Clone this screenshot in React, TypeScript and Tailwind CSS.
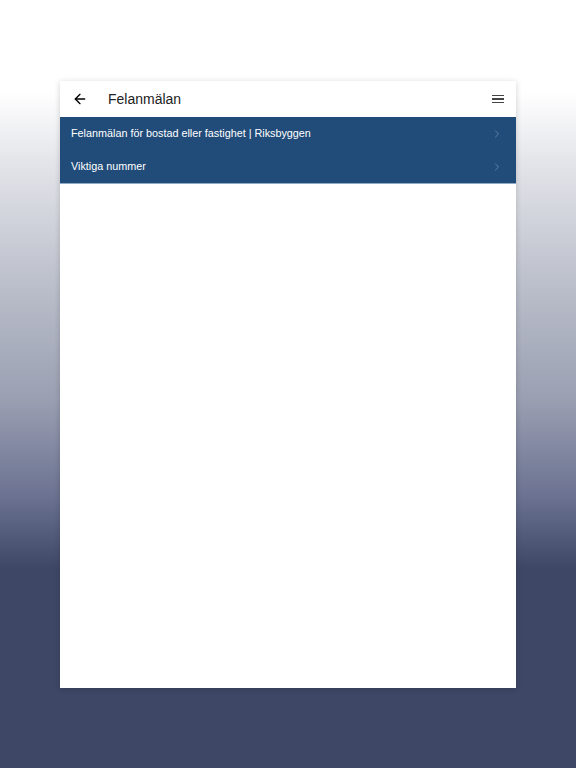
import React from "react";
import { ArrowLeft, ChevronRight } from "lucide-react";

const rows = ["Felanmälan för bostad eller fastighet | Riksbyggen", "Viktiga nummer"];

export default function App() {
  return (
    <div className="h-[768px] w-[576px] bg-[linear-gradient(to_bottom,#ffffff_0%,#ffffff_12%,#e4e5ea_21%,#b9bdc9_38%,#9a9fb2_52%,#6a7190_65%,#3e4766_74%,#3e4766_100%)] px-[60px] pt-[81px] font-['Liberation_Sans',Arial,sans-serif]">
      <div className="flex h-[607px] flex-col bg-white shadow-[0_1px_6px_rgba(0,0,0,0.18)]">
        {/* Header */}
        <div className="flex h-[36px] items-center pl-[12px] pr-[12px]">
          <ArrowLeft className="h-[16px] w-[16px] text-black" strokeWidth={2} />
          <span className="ml-[20px] text-[14px] text-[#222]">Felanmälan</span>
          <div className="ml-auto flex flex-col gap-[2px]">
            <span className="block h-[1.5px] w-[12px] bg-[#444]" />
            <span className="block h-[1.5px] w-[12px] bg-[#444]" />
            <span className="block h-[1.5px] w-[12px] bg-[#444]" />
          </div>
        </div>

        {/* Rows */}
        <div className="border-b border-[#8fa9c6] bg-[#214c79]">
          {rows.map((r) => (
            <div key={r} className="flex h-[33px] items-center pl-[11px] pr-[13px]">
              <span className="text-[10.8px] text-white">{r}</span>
              <ChevronRight className="ml-auto h-[12px] w-[12px] text-[#7391b5]" strokeWidth={1.5} />
            </div>
          ))}
        </div>
      </div>
    </div>
  );
}
